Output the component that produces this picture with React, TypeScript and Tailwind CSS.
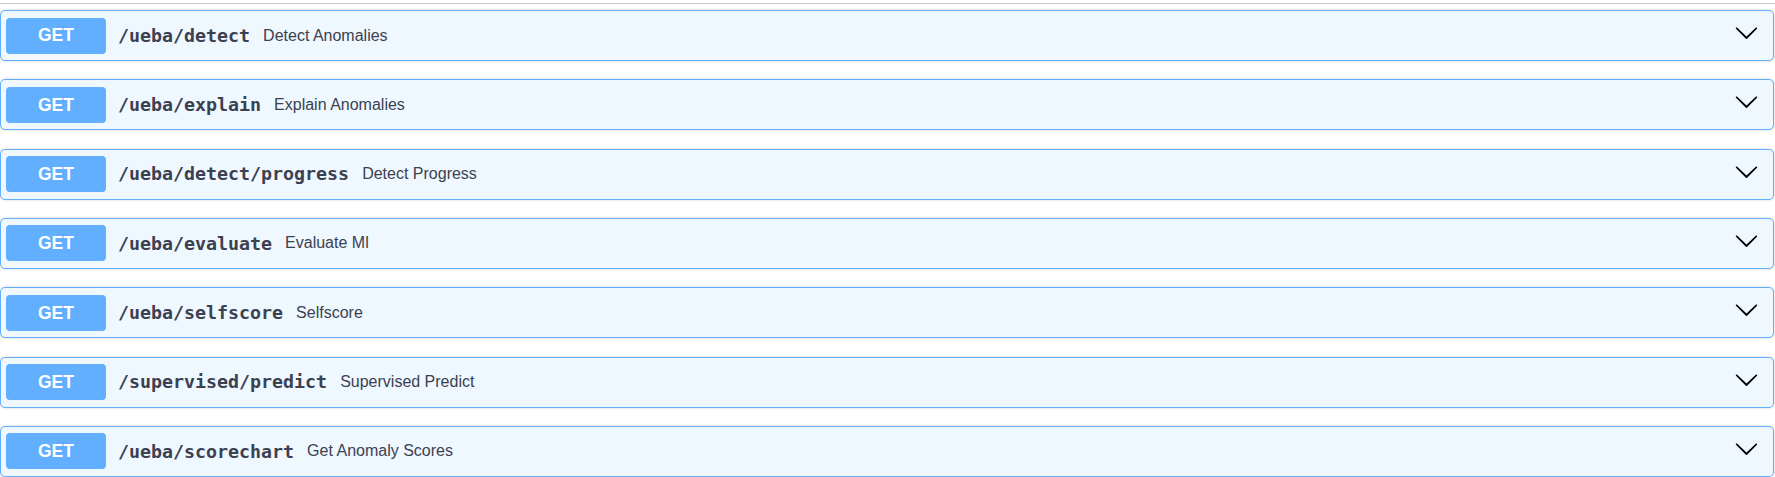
import React from 'react';

const endpoints = [
  { path: '/ueba/detect', summary: 'Detect Anomalies' },
  { path: '/ueba/explain', summary: 'Explain Anomalies' },
  { path: '/ueba/detect/progress', summary: 'Detect Progress' },
  { path: '/ueba/evaluate', summary: 'Evaluate Ml' },
  { path: '/ueba/selfscore', summary: 'Selfscore' },
  { path: '/supervised/predict', summary: 'Supervised Predict' },
  { path: '/ueba/scorechart', summary: 'Get Anomaly Scores' },
];

const Chevron = () => (
  <svg width="25" height="25" viewBox="0 0 20 20" className="shrink-0">
    <path
      fill="#000"
      d="M17.418 6.109c.272-.268.709-.268.979 0s.271.701 0 .969l-7.908 7.83c-.27.268-.707.268-.979 0l-7.908-7.83c-.27-.268-.27-.701 0-.969.271-.268.709-.268.979 0L10 13.25l7.418-7.141z"
    />
  </svg>
);

const App = () => {
  return (
    <div className="w-[1775px] h-[477px] bg-white overflow-hidden">
      {/* previous section edge */}
      <div className="h-[4px] border-b border-[#c9c9c9]" />

      <div className="mt-[6px] pr-[1px]">
        {endpoints.map((ep) => (
          <div
            key={ep.path}
            className="flex items-center h-[51px] mb-[18.33px] px-[5px] rounded-[5px] border border-[#61affe] bg-[#eff7ff] shadow-[0_0_3px_rgba(0,0,0,0.19)]"
          >
            <span
              className="flex items-center justify-center w-[100px] h-[36px] rounded-[4px] bg-[#61affe] text-white font-bold text-[17.5px]"
              style={{ fontFamily: '"Liberation Sans", Arial, sans-serif' }}
            >
              GET
            </span>
            <span
              className="ml-[12px] text-[18.3px] font-bold text-[#3b4151]"
              style={{ fontFamily: '"DejaVu Sans Mono", "Liberation Mono", monospace' }}
            >
              {ep.path}
            </span>
            <span
              className="ml-[13px] text-[16px] text-[#3b4151]"
              style={{ fontFamily: '"Liberation Sans", Arial, sans-serif' }}
            >
              {ep.summary}
            </span>
            <div className="flex-1" />
            <div className="mr-[9px] mb-[6px]">
              <Chevron />
            </div>
          </div>
        ))}
      </div>
    </div>
  );
};

export default App;
